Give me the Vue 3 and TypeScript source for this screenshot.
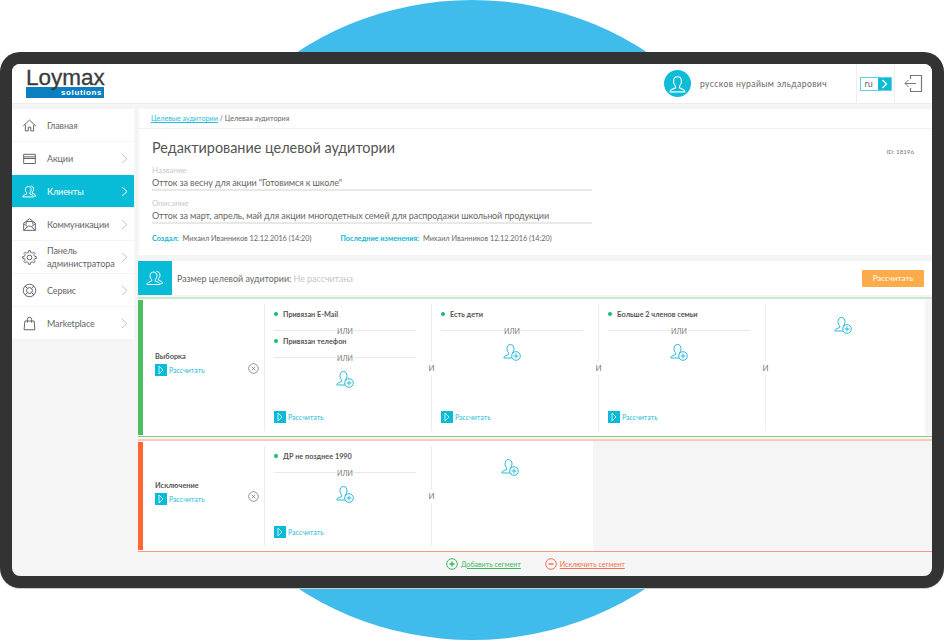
<script setup lang="ts">
interface MenuItem {
  label: string;
  icon: string;
  arrow?: boolean;
  active?: boolean;
}

interface SegmentColumn {
  items: string[];
  calc: boolean;
}

interface Segment {
  name: string;
  kind: string;
  columns: SegmentColumn[];
}

// Outline of a gear, used only by the admin menu item
function gearPath(): string {
  const cx = 9;
  const cy = 9;
  const teeth = 8;
  let d = "";
  for (let i = 0; i < teeth; i++) {
    const step = (Math.PI * 2) / teeth;
    const a = i * step;
    const pts: [number, number][] = [
      [6.1, a - step * 0.5],
      [6.3, a - step * 0.28],
      [8.2, a - step * 0.18],
      [8.2, a + step * 0.18],
      [6.3, a + step * 0.28],
    ];
    for (const [r, t] of pts) {
      const x = (cx + r * Math.cos(t)).toFixed(2);
      const y = (cy + r * Math.sin(t)).toFixed(2);
      d += (d ? "L" : "M") + x + " " + y;
    }
  }
  return d + "Z M9 6.2a2.8 2.8 0 1 0 0 5.6a2.8 2.8 0 1 0 0-5.6Z";
}

const person =
  "M7.500 1.500c-2.200 0-3.500 1.700-3.500 4.200 0 1.800.7 3.300 1.700 4.200v1.500L1.800 13.200c-.7.3-.9.9-.9 1.800h13c0-.9-.2-1.500-.9-1.800L9.300 11.400V9.900c1-.9 1.700-2.400 1.700-4.200 0-2.500-1.300-4.200-3.500-4.200Z";

const icons: Record<string, string[]> = {
  home: ["M1.500 9.500 9 2.500l7.500 7", "M4 8v7.500h3.500V11h3v4.500H14V8"],
  card: ["M2 4h14v11H2Z", "M2 7h14", "M2 9h14"],
  users: [
    "M7.500 3c-2.100 0-3.500 1.600-3.500 3.800 0 1.700.8 3.100 1.700 3.900v1.200L1.800 13.700c-.6.3-.8.8-.8 1.800h13c0-1-.2-1.500-.8-1.800l-3.900-1.800v-1.200c.9-.8 1.700-2.200 1.700-3.900C11 4.600 9.600 3 7.500 3Z",
    "M10.500 2.500c2 0 3.500 1.500 3.500 3.700 0 1.600-.7 2.900-1.600 3.700v1.100l3.200 1.600c.6.300.9.900.9 1.900h-2",
  ],
  mail: [
    "M2 7.500 9 2l7 5.500V16H2Z",
    "M2 16l5.500-5h3L16 16",
    "M2 8l4.500 3.500M16 8l-4.500 3.500",
    "M5 9V5.500h8V9",
  ],
  gear: [gearPath()],
  life: [
    "M9 1.500a7.500 7.500 0 1 0 0 15a7.500 7.500 0 1 0 0-15Z",
    "M9 5.500a3.500 3.500 0 1 0 0 7a3.500 3.500 0 1 0 0-7Z",
    "M3.700 3.700l2.800 2.800M14.300 3.700l-2.800 2.800M3.700 14.300l2.800-2.800M14.300 14.300l-2.800-2.800",
  ],
  bag: ["M3.500 6h11l1 10.500h-13Z", "M6.500 8V4a2.500 2.500 0 0 1 5 0v4"],
};

const menu: MenuItem[] = [
  { label: "Главная", icon: "home" },
  { label: "Акции", icon: "card", arrow: true },
  { label: "Клиенты", icon: "users", arrow: true, active: true },
  { label: "Коммуникации", icon: "mail", arrow: true },
  { label: "Панель администратора", icon: "gear", arrow: true },
  { label: "Сервис", icon: "life", arrow: true },
  { label: "Marketplace", icon: "bag", arrow: true },
];

const segments: Segment[] = [
  {
    name: "Выборка",
    kind: "include",
    columns: [
      { items: ["Привязан E-Mail", "Привязан телефон"], calc: true },
      { items: ["Есть дети"], calc: true },
      { items: ["Больше 2 членов семьи"], calc: true },
      { items: [], calc: false },
    ],
  },
  {
    name: "Исключение",
    kind: "exclude",
    columns: [
      { items: ["ДР не позднее 1990"], calc: true },
      { items: [], calc: false },
    ],
  },
];
</script>

<template>
  <div class="page">
    <div class="circle"></div>
    <div class="frame">
      <div class="screen">
        <header class="top">
          <div class="logo">
            <div class="logo-name">Loymax</div>
            <div class="logo-sub">solutions</div>
          </div>
          <div class="user">
            <div class="avatar">
              <svg width="17" height="18" viewBox="0 0 15 16" fill="none" stroke="#fff" stroke-width="1">
                <path :d="person" />
              </svg>
            </div>
            <span class="user-name">руссков нурайым эльдарович</span>
          </div>
          <div class="lang">
            <div class="lang-box">
              <span class="lang-code">ru</span>
              <span class="lang-arrow">
                <svg width="7" height="10" viewBox="0 0 7 10" fill="none" stroke="#fff" stroke-width="1.300">
                  <path d="M1.500 1l4 4-4 4" />
                </svg>
              </span>
            </div>
          </div>
          <div class="logout">
            <svg width="19" height="19" viewBox="0 0 19 19" fill="none" stroke="#777" stroke-width="1">
              <path d="M6.500 5V1.500h11v16h-11V14" stroke-width="1.200" />
              <path d="M12 9.500H1M4.500 6 1 9.500 4.500 13" />
            </svg>
          </div>
        </header>

        <div class="body">
          <nav class="side">
            <a v-for="item in menu" :key="item.label" class="side-item" :class="{ active: item.active }">
              <svg class="side-icon" width="15" height="15" viewBox="0 0 18 18" fill="none" stroke="currentColor" stroke-width="1.200">
                <path v-for="d in icons[item.icon]" :key="d" :d="d" />
              </svg>
              <span class="side-label">{{ item.label }}</span>
              <svg v-if="item.arrow" class="side-arrow" width="7" height="11" viewBox="0 0 7 11" fill="none" stroke="currentColor" stroke-width="1">
                <path d="M1 1l5 4.500L1 10" />
              </svg>
            </a>
          </nav>

          <main class="main">
            <div class="crumbs"><a class="crumb-link">Целевые аудитории</a> / Целевая аудитория</div>

            <section class="card">
              <div class="card-head">
                <h1>Редактирование целевой аудитории</h1>
                <span class="card-id">ID: 18196</span>
              </div>
              <div class="field first">
                <div class="field-label">Название</div>
                <div class="field-value">Отток за весну для акции "Готовимся к школе"</div>
              </div>
              <div class="field">
                <div class="field-label">Описание</div>
                <div class="field-value">Отток за март, апрель, май для акции многодетных семей для распродажи школьной продукции</div>
              </div>
              <div class="meta">
                <span class="meta-part"><b>Создал:</b> Михаил Иванников 12.12.2016 (14:20)</span>
                <span class="meta-part"><b>Последние изменения:</b> Михаил Иванников 12.12.2016 (14:20)</span>
              </div>
            </section>

            <section class="size">
              <div class="size-icon">
                <svg width="18" height="18" viewBox="0 0 18 18" fill="none" stroke="#fff" stroke-width="1">
                  <path v-for="d in icons.users" :key="d" :d="d" />
                </svg>
              </div>
              <div class="size-text">Размер целевой аудитории: <span>Не рассчитана</span></div>
              <button class="size-btn" type="button">Рассчитать</button>
            </section>

            <section v-for="seg in segments" :key="seg.name" class="segment" :class="seg.kind">
              <div class="seg-inner">
                <div class="seg-head">
                  <div class="seg-name">{{ seg.name }}</div>
                  <div class="calc">
                    <span class="play"><svg width="6" height="10" viewBox="0 0 6 10" fill="none" stroke="#fff" stroke-width="0.800"><path d="M1 1l4 4-4 4Z" /></svg></span>
                    <span>Рассчитать</span>
                  </div>
                  <svg class="seg-remove" width="11" height="11" viewBox="0 0 11 11" fill="none" stroke="#777" stroke-width="0.800">
                    <circle cx="5.500" cy="5.500" r="4.800" />
                    <path d="M3.800 3.800l3.400 3.400M7.200 3.800l-3.400 3.400" />
                  </svg>
                </div>
                <div v-for="(col, i) in seg.columns" :key="i" class="col">
                  <template v-for="text in col.items" :key="text">
                    <div class="cond"><i></i>{{ text }}</div>
                    <div class="or"><span>ИЛИ</span></div>
                  </template>
                  <div class="add">
                    <svg width="18" height="18" viewBox="0 0 18 18" fill="none" stroke="#29bbd9" stroke-width="1">
                      <path :d="person" />
                      <circle cx="13" cy="13" r="4.300" fill="#fff" />
                      <path d="M13 10.500v5M10.500 13h5" />
                    </svg>
                  </div>
                  <div v-if="col.calc" class="calc col-calc">
                    <span class="play"><svg width="6" height="10" viewBox="0 0 6 10" fill="none" stroke="#fff" stroke-width="0.800"><path d="M1 1l4 4-4 4Z" /></svg></span>
                    <span>Рассчитать</span>
                  </div>
                  <span v-if="i > 0" class="and">И</span>
                </div>
              </div>
            </section>

            <div class="links">
              <a class="link plus">
                <svg width="12" height="12" viewBox="0 0 12 12" fill="none" stroke="currentColor" stroke-width="1">
                  <circle cx="6" cy="6" r="5.300" />
                  <path d="M6 3.500v5M3.500 6h5" stroke-width="1.400" />
                </svg>
                <span>Добавить сегмент</span>
              </a>
              <a class="link minus">
                <svg width="12" height="12" viewBox="0 0 12 12" fill="none" stroke="currentColor" stroke-width="1">
                  <circle cx="6" cy="6" r="5.300" />
                  <path d="M3.500 6h5" stroke-width="1.400" />
                </svg>
                <span>Исключить сегмент</span>
              </a>
            </div>
          </main>
        </div>
      </div>
    </div>
  </div>
</template>

<style>
html,
body {
  margin: 0;
  background: #fff;
  overflow: hidden;
}
</style>

<style scoped>
.page {
  position: relative;
  width: 944px;
  height: 640px;
  padding-top: 52px;
  box-sizing: border-box;
  overflow: hidden;
  font-family: Lato, Roboto, "Liberation Sans", sans-serif;
  color: #666;
}

.circle {
  position: absolute;
  left: 152px;
  top: 0;
  width: 640px;
  height: 640px;
  border-radius: 50%;
  background: #3fbcec;
}

.frame {
  position: relative;
  height: 536px;
  box-sizing: border-box;
  padding: 12px;
  background: #333;
  border-radius: 20px;
  box-shadow: 0 1px 0 #ccc;
}

.screen {
  height: 512px;
  display: flex;
  flex-direction: column;
  background: #f5f5f5;
  border-radius: 8px;
  overflow: hidden;
}

.top {
  height: 39px;
  flex: none;
  display: flex;
  align-items: stretch;
  background: #fff;
  border-bottom: 1px solid #ececec;
}

.logo {
  margin: 3px 0 0 14px;
  width: 80px;
}

.logo-name {
  font-family: "Liberation Sans", sans-serif;
  font-size: 22.500px;
  line-height: 21px;
  height: 20px;
  color: #3c3c3c;
  -webkit-text-stroke: 0.3px #3c3c3c;
  position: relative;
  z-index: 1;
}

.logo-sub {
  height: 11px;
  width: 78px;
  background: #0b7fc0;
  color: #fff;
  font-family: "Liberation Sans", sans-serif;
  font-weight: 700;
  font-size: 8px;
  line-height: 11px;
  letter-spacing: 0.6px;
  text-align: right;
  padding-right: 2px;
  box-sizing: border-box;
}

.user {
  margin-left: auto;
  display: flex;
  align-items: center;
  gap: 9px;
  padding-right: 29px;
}

.avatar {
  width: 27px;
  height: 27px;
  border-radius: 50%;
  background: #0ebcd8;
  display: flex;
  align-items: center;
  justify-content: center;
}

.user-name {
  font-size: 8.600px;
  letter-spacing: 0.4px;
  color: #666;
}

.lang {
  width: 37px;
  border-left: 1px solid #eee;
  border-right: 1px solid #eee;
  display: flex;
  align-items: center;
  justify-content: center;
}

.lang-box {
  width: 32px;
  height: 14px;
  box-sizing: border-box;
  border: 1px solid #5fd2e6;
  display: flex;
  justify-content: space-between;
}

.lang-code {
  font-size: 9px;
  line-height: 12px;
  padding-left: 4px;
}

.lang-arrow {
  width: 13px;
  background: #0ebcd8;
  display: flex;
  align-items: center;
  justify-content: center;
}

.logout {
  width: 37px;
  display: flex;
  align-items: center;
  justify-content: center;
  margin-top: -1px;
}

.body {
  flex: 1;
  display: flex;
  gap: 4px;
  padding-top: 5px;
  min-height: 0;
}

.side {
  width: 122px;
  flex: none;
}

.side-item {
  height: 32px;
  margin-bottom: 1px;
  display: flex;
  align-items: center;
  background: #fff;
  color: #666;
}

.side-item.active {
  background: #08bcd8;
  color: #fff;
}

.side-icon {
  margin-left: 10px;
  flex: none;
}

.side-label {
  margin-left: 10px;
  font-size: 9px;
  line-height: 13px;
  letter-spacing: -0.1px;
  width: 72px;
}

.side-arrow {
  margin-left: auto;
  margin-right: 6px;
  color: #c4c4c4;
}

.active .side-arrow {
  color: #fff;
}

.main {
  flex: 1;
  min-width: 0;
  display: flex;
  flex-direction: column;
}

.crumbs {
  height: 19px;
  line-height: 19px;
  margin-left: 1px;
  padding-left: 12px;
  font-size: 7.200px;
  background: #fff;
  border-bottom: 1px solid #f0f0f0;
  color: #666;
}

.crumb-link {
  color: #29bbd9;
  text-decoration: underline;
}

.card {
  height: 126px;
  box-sizing: border-box;
  margin-left: 1px;
  padding: 9px 18px 0 13px;
  background: #fff;
}

.card-head {
  display: flex;
  align-items: center;
  justify-content: space-between;
}

.card-head h1 {
  margin: 0;
  font-size: 14.400px;
  line-height: 20px;
  font-weight: 400;
  color: #555;
}

.card-id {
  font-size: 6.200px;
  margin-top: 6px;
  color: #777;
}

.field {
  width: 440px;
  margin-top: 7px;
}

.field.first {
  margin-top: 7px;
}

.field-label {
  font-size: 8px;
  line-height: 11px;
  color: #c8c8c8;
}

.field-value {
  font-size: 9px;
  letter-spacing: -0.1px;
  line-height: 13px;
  border-bottom: 2px solid #e8e8e8;
  color: #666;
  white-space: nowrap;
}

.meta {
  display: flex;
  gap: 29px;
  margin-top: 9px;
  font-size: 7.300px;
  line-height: 11px;
}

.meta b {
  color: #14b6d4;
  margin-right: 2px;
}

.size {
  height: 34px;
  margin-top: 6px;
  display: flex;
  align-items: center;
  background: #fff;
}

.size-icon {
  width: 34px;
  height: 34px;
  background: #08bcd8;
  display: flex;
  align-items: center;
  justify-content: center;
}

.size-text {
  margin-left: 5px;
  font-size: 8.900px;
}

.size-text span {
  color: #c4c4c4;
}

.size-btn {
  margin-left: auto;
  margin-right: 8px;
  width: 62px;
  height: 17px;
  padding: 0;
  border: 0;
  border-radius: 1px;
  background: #fbab4a;
  color: #fff;
  font: 8px Lato, Roboto, sans-serif;
}

.segment {
  margin-top: 2px;
  border-bottom: 1px solid;
  box-sizing: border-box;
  flex: none;
}

.segment.include {
  height: 140px;
  border-top: 2px solid #c8e8cc;
  border-bottom-color: #7fcf8c;
}

.segment.exclude {
  height: 113px;
  border-top: 2px solid #ffc8b8;
  border-bottom-color: #f59a80;
}

.seg-inner {
  position: relative;
  display: flex;
  background: #fff;
  height: 100%;
  box-sizing: border-box;
  padding: 5px 0 5px 5px;
}

/* coloured bar stops just short of the segment's top and bottom lines */
.seg-inner::before {
  content: "";
  position: absolute;
  left: 0;
  top: 1px;
  bottom: 1px;
  width: 5px;
}

.include .seg-inner {
  width: 787px;
}

.include .seg-inner::before {
  background: #4dbd5f;
}

.exclude .seg-inner {
  width: 455px;
}

.exclude .seg-inner::before {
  background: #ff6633;
}

.seg-head {
  width: 121px;
  flex: none;
  box-sizing: border-box;
  padding: 0 0 8px 12px;
  display: flex;
  flex-direction: column;
  justify-content: center;
  position: relative;
}

.seg-name {
  font-size: 7.400px;
  font-weight: 700;
  line-height: 12px;
  color: #555;
  margin-bottom: 1px;
}

.seg-remove {
  position: absolute;
  right: 5px;
  top: 50%;
  margin-top: -5px;
}

.calc {
  display: flex;
  align-items: center;
  gap: 2px;
  font-size: 7px;
  line-height: 12px;
  color: #29bbd9;
}

.play {
  width: 12px;
  height: 12px;
  background: #08bcd8;
  display: flex;
  align-items: center;
  justify-content: center;
}

.col {
  position: relative;
  flex: 0 0 167px;
  box-sizing: border-box;
  display: flex;
  flex-direction: column;
  padding: 5px 15px 8px 9px;
  border-left: 1px solid #ececec;
}

.col:last-child {
  flex: 1;
  min-width: 0;
}

.cond {
  font-size: 7.300px;
  line-height: 11px;
  font-weight: 700;
  color: #555;
  white-space: nowrap;
}

.cond i {
  display: inline-block;
  width: 4px;
  height: 4px;
  border-radius: 50%;
  background: #12bf6c;
  margin-right: 5px;
  vertical-align: 1px;
}

.or {
  margin-top: 5px;
  height: 11px;
  display: flex;
  align-items: center;
  justify-content: center;
  font-size: 7px;
  color: #777;
}

.or::before,
.or::after {
  content: "";
  flex: 1;
  height: 1px;
  background: #e8e8e8;
}

.or span {
  padding: 0 1px;
}

.add {
  display: flex;
  justify-content: center;
  margin-top: 7px;
}

.col-calc {
  margin-top: auto;
}

.and {
  position: absolute;
  left: -5px;
  top: 50%;
  margin-top: -7px;
  width: 9px;
  height: 14px;
  background: #fff;
  font-size: 8px;
  line-height: 14px;
  text-align: center;
  color: #777;
}

.links {
  flex: 1;
  display: flex;
  align-items: center;
  gap: 24px;
  padding-left: 308px;
}

.link {
  display: flex;
  align-items: center;
  gap: 3px;
  font-size: 7.100px;
  text-decoration: underline;
}

.link.plus {
  color: #3fb860;
}

.link.minus {
  color: #f2704e;
}
</style>
